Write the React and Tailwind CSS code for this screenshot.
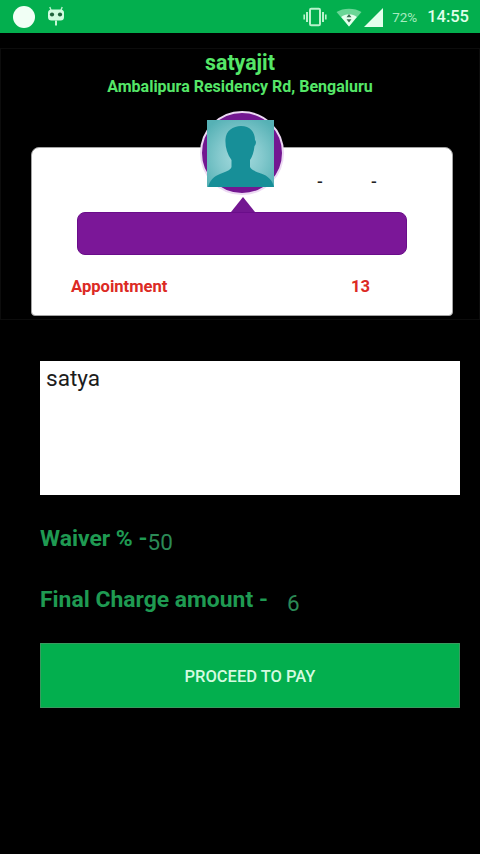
import React, { useState } from "react";

const VibrateIcon = () => (
  <svg width="24" height="20" viewBox="0 0 24 20" fill="none" stroke="#b9f2cc">
    <rect x="7" y="1.8" width="10" height="16.4" rx="1.2" strokeWidth="2" />
    <path d="M4 5v10M20 5v10" strokeWidth="2" />
    <path d="M1.2 7.5v5M22.8 7.5v5" strokeWidth="1.6" />
  </svg>
);

const WifiIcon = () => (
  <svg width="26" height="20" viewBox="0 0 26 20">
    <path d="M0.5 5C7 0.5 19 0.5 25.5 5L13 19.5z" fill="#6ad696" />
    <path d="M5.2 10C9.5 6.4 16.5 6.4 20.8 10L13 19.5z" fill="#e2ffec" />
    <path d="M13 7l2.5 3.3h-5zM13 15.5l2.5-3.3h-5z" fill="#3c6f52" />
  </svg>
);

const SignalIcon = () => (
  <svg width="19" height="19" viewBox="0 0 19 19">
    <path d="M19 0v19H0z" fill="#e2ffec" />
  </svg>
);

const RobotIcon = () => (
  <svg width="18" height="22" viewBox="0 0 18 22">
    <path d="M4 4L2.8 1M14 4L15.2 1" stroke="#b9f2cc" strokeWidth="1.4" />
    <rect x="1" y="3.5" width="16" height="11" rx="3.5" fill="#d2fbe0" />
    <circle cx="5" cy="8.5" r="2.1" fill="#20633c" />
    <circle cx="13" cy="8.5" r="2.1" fill="#20633c" />
    <path d="M8 14.5h2v5H8z" fill="#c6f7d6" />
  </svg>
);

const StatusBar = () => (
  <div className="flex h-[33px] items-center justify-between bg-[#03af4e] pl-[13px] pr-[11px] pt-px">
    <div className="flex items-center gap-[12px]">
      <div className="h-[22px] w-[22px] rounded-full bg-[#f1fff5]" />
      <RobotIcon />
    </div>
    <div className="flex items-center">
      <VibrateIcon />
      <div className="ml-[9px]">
        <WifiIcon />
      </div>
      <div className="ml-[2px]">
        <SignalIcon />
      </div>
      <span className="ml-[9px] w-[26px] whitespace-nowrap text-[13.5px] text-[#a5ebbf]">
        72%
      </span>
      <span className="ml-[9px] pt-px text-[16.5px] font-medium text-[#e0ffea]">
        14:55
      </span>
    </div>
  </div>
);

const Avatar = () => (
  <div className="flex h-[84px] w-[84px] items-center justify-center rounded-full border-2 border-[#ecd8f3] bg-[#731791]">
    <svg width="67" height="67" viewBox="0 0 67 67" className="-ml-[3px]">
      <defs>
        <radialGradient id="backdrop" cx="50%" cy="55%" r="65%">
          <stop offset="0" stopColor="#a9dde0" />
          <stop offset="0.5" stopColor="#84c9cd" />
          <stop offset="1" stopColor="#56b1b5" />
        </radialGradient>
      </defs>
      <rect width="67" height="67" fill="url(#backdrop)" />
      <path
        d="M34 6C43 6 48 12 48 20c1.5 1 1.2 4-.5 6-.5 6-2.500 11-4.500 14v7c1 3 6 4.500 11 6.500 7 2.500 11 6 13 13.500H1C3 60 7 56.500 13 54c5-2 10.500-3.500 11.500-7v-7C20 34 18 26 18.500 19 19 11 26 6 34 6z"
        fill="#178f98"
      />
    </svg>
  </div>
);

const ProfileCard = () => (
  <div className="relative ml-[30px] mt-[49px] h-[169px] w-[422px] rounded-lg rounded-b-[4px] border border-[#a3a3a3] bg-white">
    <div className="absolute -top-[37px] left-[168px]">
      <Avatar />
    </div>

    <div className="flex h-[49px] items-end gap-[47px] pl-[285px] text-[17px] font-medium leading-[32px] text-[#222222]">
      <span className="w-[7px]">-</span>
      <span className="w-[7px]">-</span>
    </div>

    <div className="ml-[45px] w-[330px]">
      <svg width="24" height="15" viewBox="0 0 24 15" className="ml-[154px]">
        <path d="M12 0l12 15H0z" fill="#731791" />
      </svg>
      <div className="h-[43px] rounded-lg border border-[#6a0d8a] bg-[#7b1798]" />
    </div>

    <div className="mt-[21px] flex justify-between pl-[39px] pr-[82px] text-[16.6px] font-bold leading-[22px] text-[#dc2a24]">
      <span>Appointment</span>
      <span>13</span>
    </div>
  </div>
);

const App = () => {
  const [note, setNote] = useState("satya");

  return (
    <div className="h-[854px] w-[480px] overflow-hidden bg-black font-['Roboto',sans-serif]">
      <StatusBar />

      {/* Profile */}
      <div className="mt-[15px] h-[272px] border border-[#0c0c0c] text-[#55e768]">
        <h1 className="mt-[2px] text-center text-[21.3px] font-bold leading-[24px]">
          satyajit
        </h1>
        <p className="mt-px text-center text-[16px] font-bold leading-[22px]">
          Ambalipura Residency Rd, Bengaluru
        </p>
        <ProfileCard />
      </div>

      {/* Charges */}
      <div className="mt-[41px] pl-[40px] pr-[20px]">
        <textarea
          value={note}
          onChange={(e) => setNote(e.target.value)}
          className="block h-[134px] w-full resize-none bg-white px-[6px] py-[4px] text-[22.6px] leading-[28px] text-[#1c1c1c] outline-none"
        />
        <div className="mt-[29px] flex h-[34px] text-[22.9px] leading-[30px] text-[#2b8a56]">
          <span className="font-bold text-[#1f9a52]">Waiver % -</span>
          <span className="mt-[3px] text-[22.5px]">50</span>
        </div>
        <div className="mt-[27px] flex h-[34px] text-[22.9px] leading-[30px] text-[#2b8a56]">
          <span className="font-bold text-[#1f9a52]">
            Final Charge amount -
          </span>
          <span className="ml-[19px] mt-[3px] text-[22.5px]">6</span>
        </div>
        <button className="mt-[24px] block h-[65px] w-full border border-[#3a9a60] bg-[#03af4e] pt-[3px] text-[16.5px] font-medium text-[#d4fbe0]">
          PROCEED TO PAY
        </button>
      </div>
    </div>
  );
};

export default App;
